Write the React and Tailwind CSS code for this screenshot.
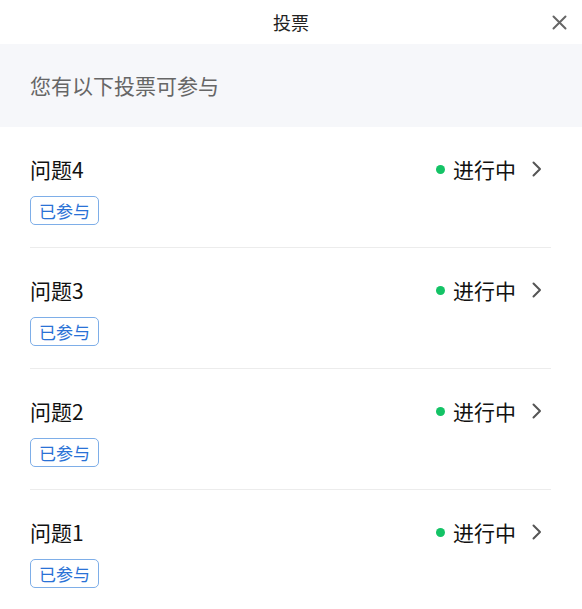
import React from 'react';

const font = { fontFamily: '"Microsoft YaHei", "Noto Sans CJK SC", "Noto Sans", sans-serif' };

const votes = [
  { title: '问题4' },
  { title: '问题3' },
  { title: '问题2' },
  { title: '问题1' },
];

const App = () => {
  return (
    <div className="w-[582px] h-[609px] bg-white overflow-hidden" style={font}>
      {/* Header */}
      <header className="relative h-[44px] flex items-center justify-center">
        <span className="text-[18px] text-[#222]">投票</span>
        <button className="absolute right-[15px] top-[14px] w-[16px] h-[16px] flex items-center justify-center">
          <svg width="15" height="15" viewBox="0 0 15 15" fill="none">
            <path d="M1.5 1.5 L13.5 13.5 M13.5 1.5 L1.5 13.5" stroke="#666" strokeWidth="2" strokeLinecap="round" />
          </svg>
        </button>
      </header>

      {/* Banner */}
      <div className="h-[83px] bg-[#f6f7fa] flex items-center px-[30px]">
        <span className="text-[21px] text-[#666]">您有以下投票可参与</span>
      </div>

      {/* List */}
      <div className="px-[30px] pr-[31px]">
        {votes.map((v, i) => (
          <div
            key={v.title}
            className={`pt-[28px] pb-[22px] ${i < votes.length - 1 ? 'border-b border-[#ececec]' : ''}`}
          >
            <div className="flex items-center justify-between h-[28px]">
              <span className="text-[21px] text-[#111] leading-[28px]">{v.title}</span>
              <div className="flex items-center">
                <span className="w-[9px] h-[9px] rounded-full bg-[#14c366]" />
                <span className="ml-[8px] text-[21px] text-[#111] leading-[28px]">进行中</span>
                <svg className="ml-[16px] mr-[9px]" width="10" height="16" viewBox="0 0 10 16" fill="none">
                  <path d="M1.5 1.5 L8 8 L1.5 14.5" stroke="#555" strokeWidth="2" strokeLinecap="round" strokeLinejoin="round" />
                </svg>
              </div>
            </div>
            <div className="mt-[13px] flex h-[29px]">
              <span className="flex items-center h-[29px] px-[8px] border border-[#7eaee8] rounded-[5px] text-[17px] leading-none text-[#2a72d6]">
                已参与
              </span>
            </div>
          </div>
        ))}
      </div>
    </div>
  );
};

export default App;
